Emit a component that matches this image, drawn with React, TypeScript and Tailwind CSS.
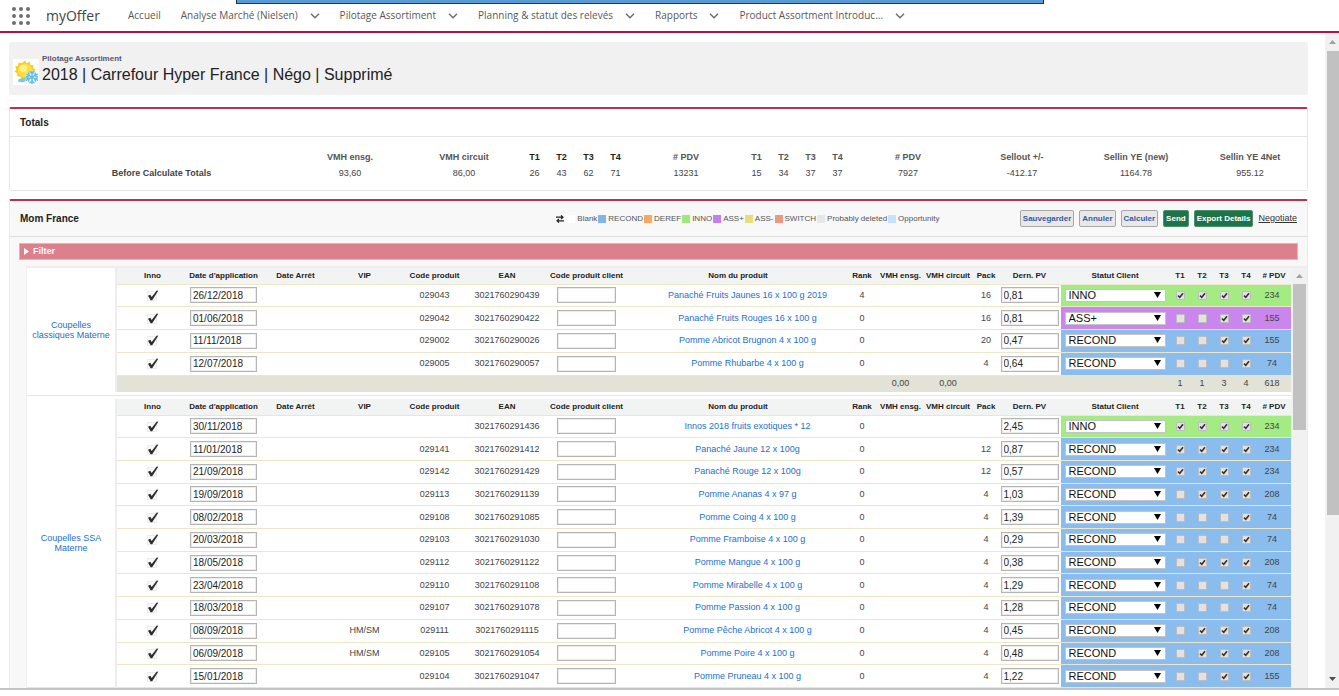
import React from "react";

const SANS = "font-['Liberation_Sans',Arial,sans-serif]";

type Status = "INNO" | "ASS+" | "RECOND";

type Product = {
  date: string;
  vip?: string;
  code: string;
  ean: string;
  name: string;
  rank: string;
  pack: string;
  price: string;
  status: Status;
  t: number[];
  pdv: string;
};

const classiques: Product[] = [
  { date: "26/12/2018", code: "029043", ean: "3021760290439", name: "Panaché Fruits Jaunes 16 x 100 g 2019", rank: "4", pack: "16", price: "0,81", status: "INNO", t: [1, 1, 1, 1], pdv: "234" },
  { date: "01/06/2018", code: "029042", ean: "3021760290422", name: "Panaché Fruits Rouges 16 x 100 g", rank: "0", pack: "16", price: "0,81", status: "ASS+", t: [0, 0, 1, 1], pdv: "155" },
  { date: "11/11/2018", code: "029002", ean: "3021760290026", name: "Pomme Abricot Brugnon 4 x 100 g", rank: "0", pack: "20", price: "0,47", status: "RECOND", t: [0, 0, 1, 1], pdv: "155" },
  { date: "12/07/2018", code: "029005", ean: "3021760290057", name: "Pomme Rhubarbe 4 x 100 g", rank: "0", pack: "4", price: "0,64", status: "RECOND", t: [0, 0, 0, 1], pdv: "74" },
];

const ssa: Product[] = [
  { date: "30/11/2018", code: "", ean: "3021760291436", name: "Innos 2018 fruits exotiques * 12", rank: "0", pack: "", price: "2,45", status: "INNO", t: [1, 1, 1, 1], pdv: "234" },
  { date: "11/01/2018", code: "029141", ean: "3021760291412", name: "Panaché Jaune 12 x 100g", rank: "0", pack: "12", price: "0,87", status: "RECOND", t: [1, 1, 1, 1], pdv: "234" },
  { date: "21/09/2018", code: "029142", ean: "3021760291429", name: "Panaché Rouge 12 x 100g", rank: "0", pack: "12", price: "0,57", status: "RECOND", t: [1, 1, 1, 1], pdv: "234" },
  { date: "19/09/2018", code: "029113", ean: "3021760291139", name: "Pomme Ananas 4 x 97 g", rank: "0", pack: "4", price: "1,03", status: "RECOND", t: [0, 1, 1, 1], pdv: "208" },
  { date: "08/02/2018", code: "029108", ean: "3021760291085", name: "Pomme Coing 4 x 100 g", rank: "0", pack: "4", price: "1,39", status: "RECOND", t: [0, 0, 0, 1], pdv: "74" },
  { date: "20/03/2018", code: "029103", ean: "3021760291030", name: "Pomme Framboise 4 x 100 g", rank: "0", pack: "4", price: "0,29", status: "RECOND", t: [0, 0, 0, 1], pdv: "74" },
  { date: "18/05/2018", code: "029112", ean: "3021760291122", name: "Pomme Mangue 4 x 100 g", rank: "0", pack: "4", price: "0,38", status: "RECOND", t: [0, 1, 1, 1], pdv: "208" },
  { date: "23/04/2018", code: "029110", ean: "3021760291108", name: "Pomme Mirabelle 4 x 100 g", rank: "0", pack: "4", price: "1,29", status: "RECOND", t: [0, 0, 0, 1], pdv: "74" },
  { date: "18/03/2018", code: "029107", ean: "3021760291078", name: "Pomme Passion 4 x 100 g", rank: "0", pack: "4", price: "1,28", status: "RECOND", t: [0, 0, 0, 1], pdv: "74" },
  { date: "08/09/2018", vip: "HM/SM", code: "029111", ean: "3021760291115", name: "Pomme Pêche Abricot 4 x 100 g", rank: "0", pack: "4", price: "0,45", status: "RECOND", t: [0, 1, 1, 1], pdv: "208" },
  { date: "06/09/2018", vip: "HM/SM", code: "029105", ean: "3021760291054", name: "Pomme Poire 4 x 100 g", rank: "0", pack: "4", price: "0,48", status: "RECOND", t: [0, 1, 1, 1], pdv: "208" },
  { date: "15/01/2018", code: "029104", ean: "3021760291047", name: "Pomme Pruneau 4 x 100 g", rank: "0", pack: "4", price: "1,22", status: "RECOND", t: [0, 0, 1, 1], pdv: "155" },
];

const statusColor: Record<Status, string> = {
  INNO: "bg-[#a5eb83]",
  "ASS+": "bg-[#c986ed]",
  RECOND: "bg-[#8abced]",
};

const legend = [
  { label: "Blank", color: "bg-white" },
  { label: "RECOND", color: "bg-[#82b6ea]" },
  { label: "DEREF", color: "bg-[#f9a95e]" },
  { label: "INNO", color: "bg-[#a0e87c]" },
  { label: "ASS+", color: "bg-[#c67fea]" },
  { label: "ASS-", color: "bg-[#e8dc7c]" },
  { label: "SWITCH", color: "bg-[#e99a80]" },
  { label: "Probably deleted", color: "bg-[#e6e6e6]" },
  { label: "Opportunity", color: "bg-[#c5e2ff]" },
];

function Chevron() {
  return (
    <svg viewBox="0 0 10 6" className="h-1.5 w-2.5" fill="none" stroke="#706e6b" strokeWidth="1.5" aria-hidden="true">
      <path d="M1 0.8 5 4.8 9 0.8" />
    </svg>
  );
}

function NavItem({ label, menu = true }: { label: string; menu?: boolean }) {
  return (
    <li className="flex items-center gap-3">
      <a href="#" className="whitespace-nowrap">{label}</a>
      {menu && (
        <button type="button" aria-label={`Menu ${label}`} className="flex">
          <Chevron />
        </button>
      )}
    </li>
  );
}

function SeasonIcon() {
  return (
    <svg viewBox="0 0 26 26" className="size-6.5 shrink-0 bg-white" aria-hidden="true">
      <path
        d="M12 1.500 13.800 4.200 16.800 2.800 17.300 6 20.500 6 19.800 9.200 22.800 10.500 20.800 13 22 16 18.800 16.500 18.500 19.500 15.500 18.800 13.500 21.500 11.500 19.200 8.500 20.500 7.500 17.500 4 17.300 4.500 14.200 1.500 12.800 3.500 10.300 2 7.500 5 6.800 5.500 3.500 8.700 4.300Z"
        fill="#f6cd22"
      />
      <circle cx="12" cy="11.500" r="7" fill="#fbe03a" />
      <circle cx="10.500" cy="9.500" r="3.800" fill="#fdf08c" />
      <path d="M5 22.500c0-2.500 2.500-4 4.500-2.500 1-2 4-1.500 4.500 1-1.500 2-6.500 3.200-9 1.500Z" fill="#7cc6ee" />
      <g stroke="#ffffff" strokeWidth="3" strokeLinecap="round" fill="none">
        <path d="M19 12.500v11.500M14 15.300l10 5.800M24 15.300l-10 5.800" />
      </g>
      <g stroke="#62bcea" strokeWidth="1.500" strokeLinecap="round" fill="none">
        <path d="M19 12v12.500M13.500 15.200l11 6M24.500 15.200l-11 6M17 12.800l2 1.800 2-1.800M17 23.800l2-1.800 2 1.800M13.800 17.500l2.400-.8-.6-2.500M24.200 17.500l-2.400-.8.6-2.500M13.800 19l2.400.8-.6 2.300M24.200 19l-2.400.8.6 2.300" />
      </g>
    </svg>
  );
}

function TotalsCell({ children, head, bold }: { children?: React.ReactNode; head?: boolean; bold?: boolean }) {
  if (head) {
    return (
      <th scope="col" className={bold ? "p-0 text-center font-bold text-[#222]" : "p-0 text-center font-bold text-[#555]"}>
        {children}
      </th>
    );
  }
  return <td className="p-0 text-center">{children}</td>;
}

function Totals() {
  return (
    <section className="mt-3 rounded-xs border border-t-2 border-[#e6e6e6] border-t-[#b0354f]">
      <h2 className="flex h-7 items-center border-b border-[#e4e4e4] pl-2.5 text-[10px] font-bold text-[#222]">Totals</h2>
      <div className="h-[53px] pt-3">
        <table className="w-full table-fixed border-collapse text-[9px] leading-4 text-[#444]">
          <colgroup>
            <col />
            <col className="w-[114px]" />
            <col className="w-[114px]" />
            <col className="w-[27px]" span={4} />
            <col className="w-[114px]" />
            <col className="w-[27px]" span={4} />
            <col className="w-[114px]" span={4} />
          </colgroup>
          <thead>
            <tr>
              <td className="p-0" />
              <TotalsCell head>VMH ensg.</TotalsCell>
              <TotalsCell head>VMH circuit</TotalsCell>
              {["T1", "T2", "T3", "T4"].map((t) => (
                <TotalsCell head bold key={t}>{t}</TotalsCell>
              ))}
              <TotalsCell head># PDV</TotalsCell>
              {["T1", "T2", "T3", "T4"].map((t) => (
                <TotalsCell head key={t}>{t}</TotalsCell>
              ))}
              <TotalsCell head># PDV</TotalsCell>
              <TotalsCell head>Sellout +/-</TotalsCell>
              <TotalsCell head>Sellin YE (new)</TotalsCell>
              <TotalsCell head>Sellin YE 4Net</TotalsCell>
            </tr>
          </thead>
          <tbody>
            <tr>
              <th scope="row" className="p-0 pl-5 text-center font-bold">Before Calculate Totals</th>
              {["93,60", "86,00", "26", "43", "62", "71", "13231", "15", "34", "37", "37", "7927", "-412.17", "1164.78", "955.12"].map((v, i) => (
                <TotalsCell key={i}>{v}</TotalsCell>
              ))}
            </tr>
          </tbody>
        </table>
      </div>
    </section>
  );
}

function ActionButton({ children, green }: { children: string; green?: boolean }) {
  return (
    <button
      type="button"
      className={
        green
          ? "h-[17px] rounded-xs border border-[#4d8f70] bg-[#1c7448] px-0.5 text-[8px] font-bold text-white"
          : "h-[17px] rounded-xs border border-[#a8a8a8] bg-[#e8e8e9] px-0.5 text-[8px] font-bold text-[#3a5a9b]"
      }
    >
      {children}
    </button>
  );
}

function Tick({ label, checked }: { label: string; checked: boolean }) {
  return (
    <span className="mx-auto grid size-[9px] place-items-center">
      <input
        type="checkbox"
        aria-label={label}
        defaultChecked={checked}
        className="peer col-start-1 row-start-1 size-[9px] appearance-none rounded-[1px] border border-[#bdbdbd] bg-[#e2e2e2]"
      />
      <svg viewBox="0 0 9 9" className="pointer-events-none invisible col-start-1 row-start-1 size-[9px] peer-checked:visible" fill="none" stroke="#333" strokeWidth="1.600" aria-hidden="true">
        <path d="M2 4.700 3.800 6.300 7 2.300" />
      </svg>
    </span>
  );
}

function InnoMark() {
  return (
    <svg viewBox="0 0 13 13" className="mx-auto size-[13px]" role="img" aria-label="Inno">
      <rect x="1.500" y="2.500" width="9" height="9" fill="#f8f8f8" stroke="#dcdcdc" strokeDasharray="1 1" />
      <path d="M2 6.800 4.300 5.800 5.700 8 10.800 1.500 12.300 1.800 6.200 11.200 4.600 11.200Z" fill="#2d2d2d" />
    </svg>
  );
}

function Columns() {
  return (
    <colgroup>
      <col className="w-[89px]" />
      <col className="w-[72px]" />
      <col className="w-[71px]" />
      <col className="w-[73px]" />
      <col className="w-[65px]" />
      <col className="w-[75px]" />
      <col className="w-[70px]" />
      <col className="w-[89px]" />
      <col />
      <col className="w-[34px]" />
      <col className="w-[43px]" />
      <col className="w-[52px]" />
      <col className="w-[24px]" />
      <col className="w-[63px]" />
      <col className="w-[108px]" />
      <col className="w-[22px]" span={4} />
      <col className="w-[34px]" />
    </colgroup>
  );
}

const headings = [
  "Inno", "Date d'application", "Date Arrêt", "VIP", "Code produit", "EAN", "Code produit client", "Nom du produit",
  "Rank", "VMH ensg.", "VMH circuit", "Pack", "Dern. PV", "Statut Client", "T1", "T2", "T3", "T4", "# PDV",
];

const field = "block h-4 border border-[#b5b5b5] bg-white pl-0.5 text-[10px] leading-3 text-[#222] shadow-[inset_0_0_0_1px_#ececec]";

function ProductRow({ p }: { p: Product }) {
  const color = statusColor[p.status];
  return (
    <tr className="border-b border-[#ece6cb]">
      <td className="p-0"><InnoMark /></td>
      <td className="p-0">
        <input type="text" aria-label={`Date d'application ${p.name}`} defaultValue={p.date} className={`${field} mx-auto w-[67px]`} />
      </td>
      <td className="p-0" />
      <td className="p-0">{p.vip}</td>
      <td className="p-0">{p.code}</td>
      <td className="p-0">{p.ean}</td>
      <td className="p-0">
        <input type="text" aria-label={`Code produit client ${p.name}`} className={`${field} mx-auto w-[59px]`} />
      </td>
      <td className="p-0 pl-[19px]">
        <a href="#" className="whitespace-nowrap text-[#2470c8]">{p.name}</a>
      </td>
      <td className="p-0">{p.rank}</td>
      <td className="p-0" />
      <td className="p-0" />
      <td className="p-0">{p.pack}</td>
      <td className="p-0">
        <input type="text" aria-label={`Dern. PV ${p.name}`} defaultValue={p.price} className={`${field} mx-auto w-[58px]`} />
      </td>
      <td className={`p-0 ${color}`}>
        <span className="relative mx-auto block w-[101px]">
          <select aria-label={`Statut Client ${p.name}`} defaultValue={p.status} className="block h-[13px] w-full appearance-none border border-[#c4c4c4] bg-white pl-[3px] text-left text-[11px] leading-[11px] text-[#111]">
            <option>INNO</option>
            <option>ASS+</option>
            <option>RECOND</option>
          </select>
          <svg viewBox="0 0 7 6" className="pointer-events-none absolute top-[3px] right-[5px] h-1.5 w-[7px]" aria-hidden="true">
            <path d="M0 0h7L3.500 6Z" fill="#000" />
          </svg>
        </span>
      </td>
      {p.t.map((on, i) => (
        <td key={i} className={`p-0 ${color}`}>
          <Tick label={`T${i + 1} ${p.name}`} checked={on === 1} />
        </td>
      ))}
      <td className={`p-0 pr-1 ${color}`}>{p.pdv}</td>
    </tr>
  );
}

function ProductTable({ group, products, totals, height }: { group: string; products: Product[]; totals?: string[]; height: string }) {
  const span = products.length + 1 + (totals ? 1 : 0);
  return (
    <table className={`w-full table-fixed border-collapse bg-white text-center text-[9px] leading-[11px] text-[#444] ${height}`}>
      <Columns />
      <tbody>
        <tr className="h-4 border-b border-[#ece6cb] bg-[#f2f4f4]">
          <th rowSpan={span} scope="rowgroup" className="border-r-2 border-[#ededed] bg-white p-0 text-center font-normal">
            <a href="#" className="block px-1 text-[9px] leading-2.5 text-[#2470c8]">{group}</a>
          </th>
          {headings.map((h, i) => (
            <th key={i} scope="col" className="p-0 text-center text-[8px] leading-3 font-bold whitespace-nowrap text-[#222]">{h}</th>
          ))}
        </tr>
        {products.map((p) => (
          <ProductRow key={p.ean} p={p} />
        ))}
        {totals && (
          <tr className="h-[17px] bg-[#e2e2d6]">
            {totals.map((v, i) => (
              <td key={i} className={i === 18 ? "p-0 pr-1" : "p-0"}>{v}</td>
            ))}
          </tr>
        )}
      </tbody>
    </table>
  );
}

function Arrow({ down }: { down?: boolean }) {
  return (
    <svg viewBox="0 0 7 4" className="h-1 w-[7px]" aria-hidden="true">
      {down ? <path d="M0 0h7L3.500 4Z" fill="#505050" /> : <path d="M0 4h7L3.500 0Z" fill="#a3a3a3" />}
    </svg>
  );
}

export default function App() {
  return (
    <div className={`relative flex h-screen flex-col overflow-hidden bg-white pb-1.5 text-[#333] ${SANS}`}>
      <div className="absolute top-0 left-[236px] h-1 w-[808px] border-x border-b border-[#1f3a56] bg-[#5b9bd5]" />
      <header className="flex h-[33px] shrink-0 items-center border-b-2 border-[#b0124a] pl-3">
        <button type="button" aria-label="App Launcher" className="grid grid-cols-3 gap-[3px]">
          {Array.from({ length: 9 }, (_, i) => (
            <span key={i} className="size-1 rounded-full bg-[#706e6b]" />
          ))}
        </button>
        <span className="ml-4 w-[82px] font-['Open_Sans','Noto_Sans',sans-serif] text-[14px] text-[#444]">myOffer</span>
        <nav>
          <ul className="flex items-center gap-5 font-['Open_Sans','Noto_Sans',sans-serif] text-[10px] text-[#5a5856]">
            <NavItem label="Accueil" menu={false} />
            <NavItem label="Analyse Marché (Nielsen)" />
            <NavItem label="Pilotage Assortiment" />
            <NavItem label="Planning & statut des relevés" />
            <NavItem label="Rapports" />
            <NavItem label="Product Assortment Introduc..." />
          </ul>
        </nav>
      </header>

      <div className="flex min-h-0 flex-1 border-b-2 border-[#c4c4c4]">
        <main className="flex min-w-0 flex-1 flex-col overflow-hidden pt-[9px] pr-[17px] pl-[9px]">
          <div className="flex h-[53px] shrink-0 items-center gap-[3px] rounded-xs bg-[#f1f1f1] pl-1">
            <div className="pt-1.5"><SeasonIcon /></div>
            <div>
              <p className="text-[8px] leading-3 font-bold text-[#5b5568]">Pilotage Assortiment</p>
              <h1 className="text-[16px] leading-5 text-[#222]">2018 | Carrefour Hyper France | Négo | Supprimé</h1>
            </div>
          </div>

          <Totals />

          <section className="mt-2 flex min-h-0 flex-1 flex-col overflow-hidden rounded-t-xs border border-t-2 border-b-0 border-[#ebebeb] border-t-[#b0354f] bg-[#f8f8f8]">
            <div className="flex h-9 shrink-0 items-center border-b border-[#dedede] pr-2.5 pl-2.5">
              <h2 className="w-[42%] text-[10px] font-bold text-[#222]">Mom France</h2>
              <div className="flex flex-1 items-center text-[8px] text-[#555]">
                <svg viewBox="0 0 8 8" className="mr-[3px] size-2" fill="none" stroke="#222" strokeWidth="1.200" aria-hidden="true">
                  <path d="M0 2.200h7M5 .4l2 1.800-2 1.800M8 5.800H1M3 4 1 5.800l2 1.800" />
                </svg>
                <ul className="flex items-center gap-px whitespace-nowrap">
                  {legend.map((l) => (
                    <li key={l.label} className="flex items-center gap-0.5">
                      <span className={`size-2 ${l.color}`} />
                      {l.label}
                    </li>
                  ))}
                </ul>
              </div>
              <div className="flex items-center gap-[5px] whitespace-nowrap">
                <ActionButton>Sauvegarder</ActionButton>
                <ActionButton>Annuler</ActionButton>
                <ActionButton>Calculer</ActionButton>
                <ActionButton green>Send</ActionButton>
                <ActionButton green>Export Details</ActionButton>
                <a href="#" className="text-[9px] text-[#333] underline">Negotiate</a>
              </div>
            </div>

            <div className="mx-[9px] mt-1.5 shrink-0 border border-[#eab0b7] bg-[#dc808b]">
              <button type="button" className="flex h-[15px] w-full items-center gap-1 pl-1 text-[9px] font-bold text-white">
                <svg viewBox="0 0 5 7" className="h-[7px] w-[5px]" aria-hidden="true">
                  <path d="M0 0v7l5-3.500Z" fill="#fff" />
                </svg>
                Filter
              </button>
            </div>

            <div className="mt-1.5 ml-4 flex min-h-0 flex-1 border-t-2 border-l border-[#eeeeee]">
              <div className="min-w-0 flex-1 overflow-hidden bg-white">
                <ProductTable
                  group="Coupelles classiques Materne"
                  products={classiques}
                  totals={["", "", "", "", "", "", "", "", "", "0,00", "0,00", "", "", "", "1", "1", "3", "4", "618"]}
                  height="h-[124px]"
                />
                <div className="mt-[3px] border-t border-[#ece6cb] pt-[3px]">
                  <ProductTable group="Coupelles SSA Materne" products={ssa} height="h-[289px]" />
                </div>
              </div>
              <div className="flex w-4 shrink-0 flex-col items-center bg-[#f1f1f1]">
                <div className="flex h-4 items-center"><Arrow /></div>
                <div className="h-[146px] w-[13px] bg-[#c1c1c1]" />
              </div>
            </div>
          </section>
        </main>

        <div className="flex w-3.5 shrink-0 flex-col items-center bg-[#f1f1f1]">
          <div className="flex h-[18px] items-center"><Arrow /></div>
          <div className="flex w-full flex-1 flex-col">
            <div className="ml-0.5 h-3/4 bg-[#c1c1c1]" />
          </div>
          <div className="flex h-[18px] items-center"><Arrow down /></div>
        </div>
      </div>
    </div>
  );
}
